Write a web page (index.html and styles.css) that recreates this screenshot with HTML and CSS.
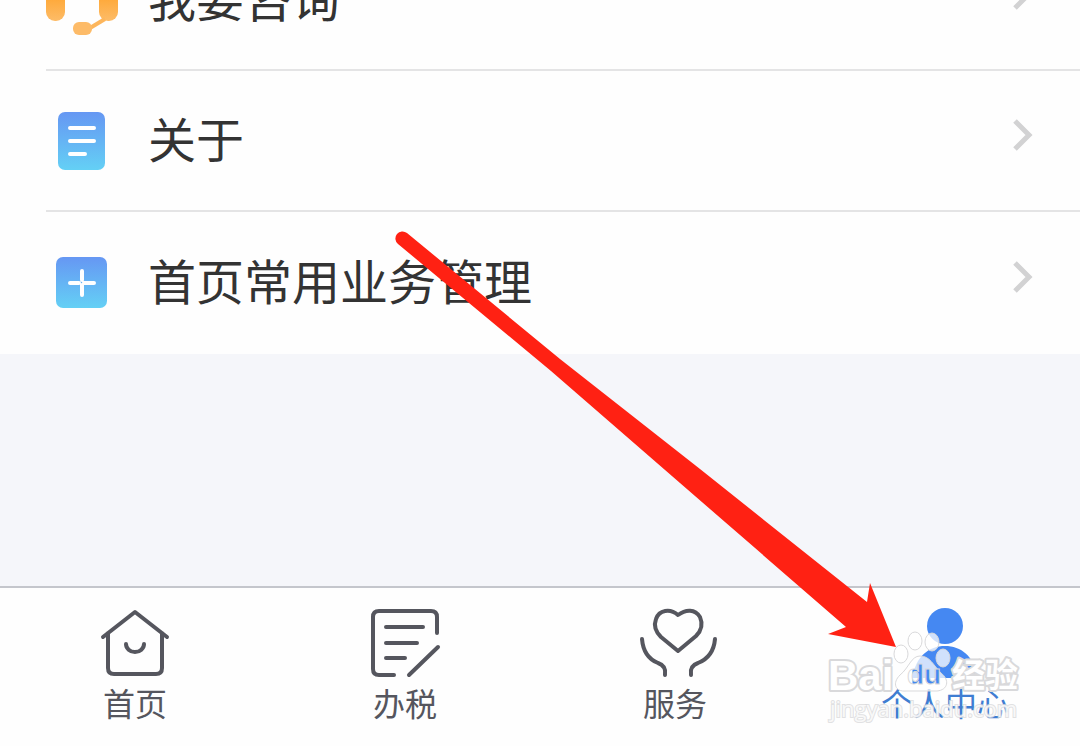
FILE: index.html
```html
<!DOCTYPE html>
<html lang="zh-CN">
<head>
<meta charset="utf-8">
<meta name="viewport" content="width=device-width, initial-scale=1">
<title>个人中心</title>
<link rel="stylesheet" href="styles.css">
</head>
<body>
<div class="screen">
  <main class="content">
    <ul class="menu">
      <li><a class="row" href="#consult">
        <svg class="row-icon" width="80" height="80" viewBox="0 0 80 80" aria-hidden="true">
          <defs><linearGradient id="amber" x1="0" y1="0" x2="0" y2="1"><stop offset="0" stop-color="#ff9f22"/><stop offset="1" stop-color="#fdbc68"/></linearGradient></defs>
          <path d="M13 32a28 28 0 0 1 54 0" fill="none" stroke="#ffa02a" stroke-width="5"/>
          <rect x="5" y="27" width="19" height="34" rx="9" fill="url(#amber)"/>
          <rect x="58" y="27" width="19" height="34" rx="9" fill="url(#amber)"/>
          <path d="M64 59 L49 68" stroke="#fdb65c" stroke-width="4"/>
          <rect x="32" y="62" width="19" height="13" rx="6" fill="#fdbb68"/>
        </svg>
        <span class="row-label">我要咨询</span>
        <svg class="chevron" width="24" height="36" viewBox="0 0 24 36" aria-hidden="true"><path d="M3 4 L17 18 L3 32"/></svg>
      </a></li>
      <li><a class="row" href="#about">
        <svg class="row-icon" width="80" height="80" viewBox="0 0 80 80" aria-hidden="true">
          <defs><linearGradient id="sky" x1="0" y1="0" x2="0" y2="1"><stop offset="0" stop-color="#6697f3"/><stop offset="1" stop-color="#64d0f5"/></linearGradient></defs>
          <rect x="17" y="11" width="47" height="58" rx="7" fill="url(#sky)"/>
          <path d="M29 27H53M29 40H53M29 53H44" stroke="#fff" stroke-width="4" stroke-linecap="round"/>
        </svg>
        <span class="row-label">关于</span>
        <svg class="chevron" width="24" height="36" viewBox="0 0 24 36" aria-hidden="true"><path d="M3 4 L17 18 L3 32"/></svg>
      </a></li>
      <li><a class="row" href="#manage">
        <svg class="row-icon" width="80" height="80" viewBox="0 0 80 80" aria-hidden="true">
          <rect x="15" y="14" width="51" height="51" rx="7" fill="url(#sky)"/>
          <path d="M29 40H38M43 40H53M41 28V37M41 42V52" stroke="#fff" stroke-width="4" stroke-linecap="round"/>
        </svg>
        <span class="row-label">首页常用业务管理</span>
        <svg class="chevron" width="24" height="36" viewBox="0 0 24 36" aria-hidden="true"><path d="M3 4 L17 18 L3 32"/></svg>
      </a></li>
    </ul>
  </main>
  <nav class="tabs">
    <a class="tab" href="#home">
      <svg class="tab-icon" width="80" height="72" viewBox="0 0 80 72" aria-hidden="true">
        <path d="M8 29 L40 4 L72 29M13 25V60Q13 66 19 66H61Q67 66 67 60V25M31 36a9 8 0 0 0 18 0"/>
      </svg>
      <span>首页</span>
    </a>
    <a class="tab" href="#tax">
      <svg class="tab-icon" width="80" height="72" viewBox="0 0 80 72" aria-hidden="true">
        <path d="M72 25V9Q72 3 66 3H14Q8 3 8 9V61Q8 67 14 67H29M21 19H58M21 35H52M21 50H40M44 67 L73 39"/>
      </svg>
      <span>办税</span>
    </a>
    <a class="tab" href="#service">
      <svg class="tab-icon" width="80" height="72" viewBox="0 0 80 72" aria-hidden="true">
        <path d="M43 7C35 0 24 2 21 11C18 19 22 25 26 29L43 43L61 28C67 22 68 16 65 9C60 1 51 1 43 7ZM7 31C8 43 13 51 23 55C29 57 31 61 30 67M80 31C79 43 73 51 63 55C57 57 55 61 56 67"/>
      </svg>
      <span>服务</span>
    </a>
    <a class="tab active" href="#me" aria-current="page">
      <svg class="tab-icon" width="80" height="72" viewBox="0 0 80 72" aria-hidden="true">
        <circle cx="40" cy="18" r="18"/><path d="M7 70C11 48 24 38 40 38S69 48 73 70Z"/>
      </svg>
      <span>个人中心</span>
    </a>
  </nav>
  <svg class="pointer" width="510" height="424" viewBox="390 226 510 424" aria-hidden="true">
    <path d="M407 233 L560 359 L700 469 L867 602 L870 583 L896 647 L828 634 L846 627 L680 483 L551 371 L398 244A7 7 0 0 1 407 233Z"/>
  </svg>
  <svg class="watermark" width="210" height="102" viewBox="820 624 210 102" role="img" aria-label="Baidu经验">
    <defs><linearGradient id="split" gradientUnits="userSpaceOnUse" x1="912" y1="0" x2="913" y2="0"><stop offset="0" stop-color="#fff"/><stop offset="1" stop-color="#4588f2"/></linearGradient></defs>
    <g class="mark">
      <ellipse cx="901" cy="654" rx="7" ry="9"/><ellipse cx="915" cy="641" rx="7" ry="9"/><ellipse cx="932" cy="642" rx="7" ry="9"/><ellipse cx="943" cy="658" rx="7" ry="9"/>
      <path d="M920 656C911 656 909 668 900 675C892 683 895 692 906 691H937C948 690 950 680 941 673C933 665 930 656 920 656Z"/>
      <text class="brand" x="828" y="690">Bai</text>
      <text class="brand-cjk" x="952" y="687">经验</text>
    </g>
    <text class="du" x="907" y="684">du</text>
    <text class="site" x="830" y="717">jingyan.baidu.com</text>
  </svg>
</div>
</body>
</html>
```
FILE: styles.css
```css
* { box-sizing: border-box; }

body {
  margin: 0;
  background: #f5f6fa;
  color: #333;
  font-family: "Noto Sans CJK SC", sans-serif;
}

a { color: inherit; text-decoration: none; }

.screen {
  position: relative;
  display: flex;
  flex-direction: column;
  min-height: 100vh;
  overflow: hidden;
}

.content { flex: 1; }

/* The list is scrolled, so its first row starts above the window. */
.menu {
  margin: -70px 0 0;
  padding: 0 0 0 46px;
  list-style: none;
  background: #fefefe;
}

.menu li { border-bottom: 2px solid #e4e4e5; }
.menu li:last-child { border-bottom: 0; }

.row {
  display: flex;
  align-items: center;
  height: 139px;
  padding-right: 44px;
}

.menu li:last-child .row { height: 142px; }

.row-icon { flex: none; margin-left: -5px; }

.row-label {
  flex: 1;
  margin-left: 27px;
  padding-bottom: 8px;
  font-size: 48px;
  line-height: 72px;
}

.chevron {
  margin-bottom: 12px;
  fill: none;
  stroke: #d2d2d3;
  stroke-width: 5;
}

.tabs {
  display: grid;
  grid-template-columns: repeat(4, 1fr);
  height: 160px;
  padding-top: 20px;
  border-top: 2px solid #c4c6cc;
  background: #fefefe;
}

.tab {
  display: flex;
  flex-direction: column;
  align-items: center;
  color: #55565e;
  font-size: 32px;
  line-height: 44px;
}

.tab-icon {
  flex: none;
  overflow: visible;
  fill: none;
  stroke: currentColor;
  stroke-width: 4;
  stroke-linecap: round;
  stroke-linejoin: round;
}

.tab.active { color: #4588f2; }
.tab.active span { color: #3f7dd2; }
.active .tab-icon { fill: currentColor; stroke: none; }

.pointer {
  position: absolute;
  top: 226px;
  left: 390px;
  fill: #ff2113;
  pointer-events: none;
}

.watermark {
  position: absolute;
  right: 50px;
  bottom: 20px;
  pointer-events: none;
}

.mark {
  fill: #fff;
  fill-opacity: 0.75;
  stroke: #d9d9db;
  stroke-width: 1;
}

.mark text {
  fill-opacity: 1;
  stroke-width: 4;
  stroke-linejoin: round;
  paint-order: stroke;
}

.brand { font: bold 42px "Liberation Sans", sans-serif; }
.brand-cjk { font: bold 33px "Noto Sans CJK SC", sans-serif; }

.du {
  fill: url(#split);
  stroke: #d9d9db;
  stroke-width: 1;
  font: bold 28px "Liberation Sans", sans-serif;
}

.site {
  fill: #fff;
  fill-opacity: 0.8;
  stroke: #d9d9db;
  stroke-opacity: 0.8;
  stroke-width: 2;
  paint-order: stroke;
  font: 22px "Open Sans", sans-serif;
}
```
